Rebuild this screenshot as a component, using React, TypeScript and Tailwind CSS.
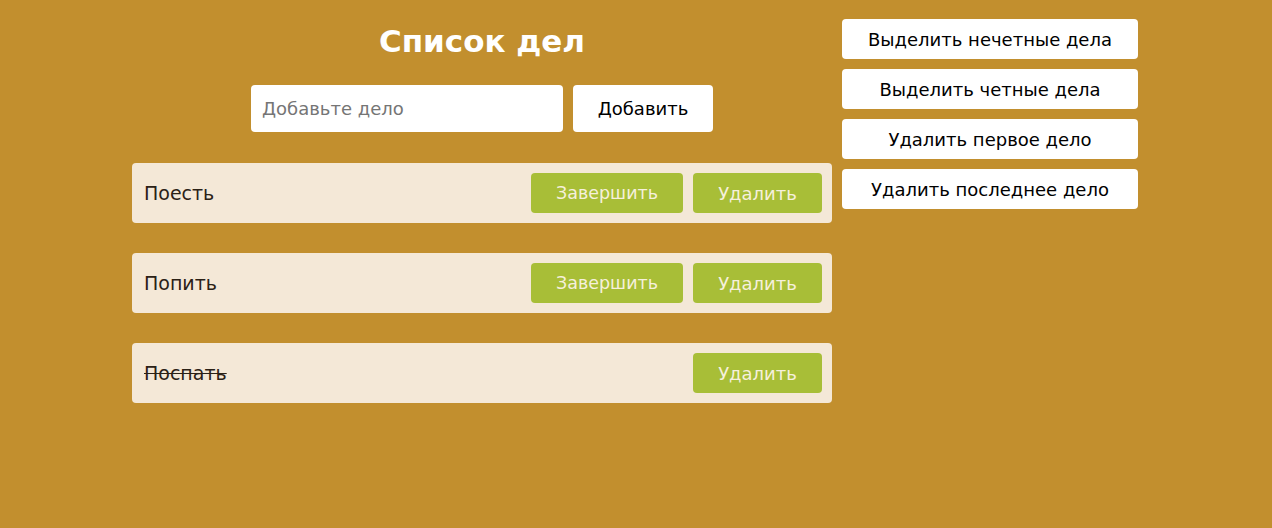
import React, { useState } from 'react';

interface Task {
  id: number;
  text: string;
  done: boolean;
}

const initialTasks: Task[] = [
  { id: 1, text: 'Поесть', done: false },
  { id: 2, text: 'Попить', done: false },
  { id: 3, text: 'Поспать', done: true },
];

const sideActions = [
  'Выделить нечетные дела',
  'Выделить четные дела',
  'Удалить первое дело',
  'Удалить последнее дело',
];

export default function App() {
  const [tasks, setTasks] = useState<Task[]>(initialTasks);
  const [value, setValue] = useState('');

  const addTask = () => {
    if (!value.trim()) return;
    setTasks([...tasks, { id: Date.now(), text: value, done: false }]);
    setValue('');
  };

  return (
    <div className="min-h-[528px] bg-[#c28f2e] font-['Comic_Sans_MS','DejaVu_Sans',sans-serif] flex justify-center gap-[10px] pt-[19px] pr-[2px]">
      <div className="w-[700px] flex flex-col items-center">
        <h1 className="text-[31px] leading-[44px] font-bold text-white">Список дел</h1>
        <div className="flex gap-[10px] mt-[22px]">
          <input
            value={value}
            onChange={e => setValue(e.target.value)}
            placeholder="Добавьте дело"
            className="w-[312px] h-[47px] rounded bg-white px-[11px] text-[18px] text-black placeholder:text-[#757575] outline-none"
          />
          <button
            onClick={addTask}
            className="w-[140px] h-[47px] rounded bg-white text-[18px] text-black"
          >
            Добавить
          </button>
        </div>
        <div className="w-full flex flex-col gap-[30px] mt-[31px]">
          {tasks.map(task => (
            <div
              key={task.id}
              className="h-[60px] rounded bg-[#f4e8d7] flex items-center justify-between pl-[12px] pr-[10px]"
            >
              <span className={`text-[19px] text-[#2b2116] ${task.done ? 'line-through' : ''}`}>
                {task.text}
              </span>
              <div className="flex gap-[10px]">
                {!task.done && (
                  <button
                    onClick={() =>
                      setTasks(tasks.map(t => (t.id === task.id ? { ...t, done: true } : t)))
                    }
                    className="w-[152px] h-[40px] rounded bg-[#a8be37] text-[17.5px] text-[#f6f0dc]"
                  >
                    Завершить
                  </button>
                )}
                <button
                  onClick={() => setTasks(tasks.filter(t => t.id !== task.id))}
                  className="w-[129px] h-[40px] rounded bg-[#a8be37] text-[18px] text-[#f6f0dc]"
                >
                  Удалить
                </button>
              </div>
            </div>
          ))}
        </div>
      </div>
      <div className="w-[296px] flex flex-col gap-[10px]">
        {sideActions.map(label => (
          <button key={label} className="h-[40px] rounded bg-white text-[18px] text-black">
            {label}
          </button>
        ))}
      </div>
    </div>
  );
}
